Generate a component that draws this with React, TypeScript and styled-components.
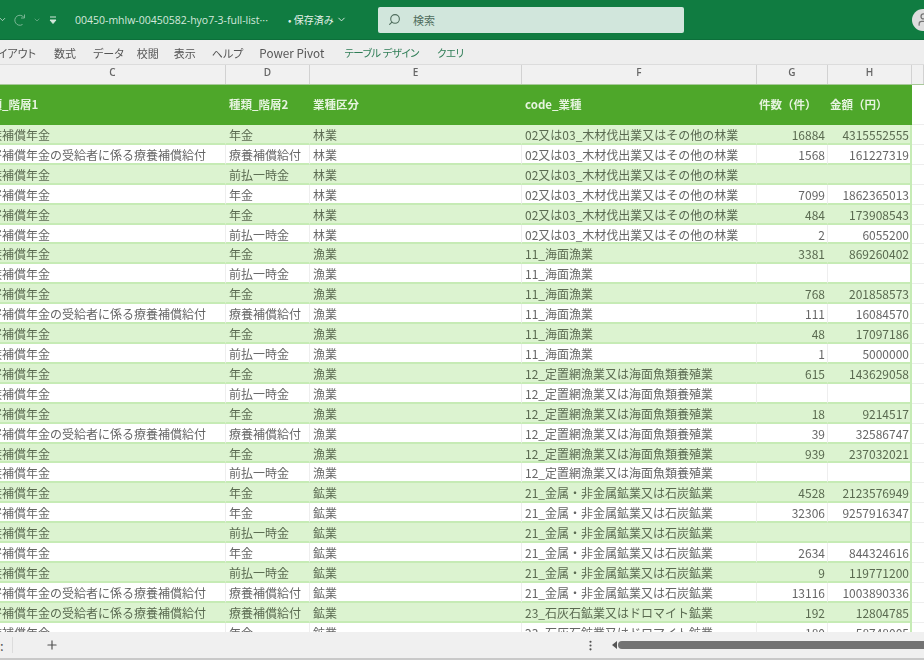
import React from 'react';
import styled, { createGlobalStyle } from 'styled-components';
import { ChevronDown, EllipsisVertical, Plus, Search, User } from 'lucide-react';

const GlobalStyle = createGlobalStyle`
    html, body {
        margin: 0;
        padding: 0;
        background: #ffffff;
    }
    * {
        box-sizing: border-box;
    }
`;

const COLUMNS = '226px 84px 212px 235px 71px 84px 1fr';

const Window = styled.div`
    width: 924px;
    height: 660px;
    overflow: hidden;
    display: flex;
    flex-direction: column;
    font-family: "Noto Sans CJK JP", "Noto Sans", sans-serif;
    font-size: 12px;
    color: #5c5c5c;
    filter: blur(0.5px);
`;

const TitleBar = styled.div`
    flex: 0 0 40px;
    display: flex;
    align-items: center;
    background: #107c41;
    border-bottom: 1px solid #0c6f3a;
    color: #d4e8dc;
    overflow: hidden;
`;

const QuickIcon = styled.span<{ $width: number; $dim?: boolean; $gap?: number }>`
    flex: 0 0 ${(p) => p.$width}px;
    margin-left: ${(p) => p.$gap || 0}px;
    display: flex;
    align-items: center;
    justify-content: center;
    opacity: ${(p) => (p.$dim ? 0.55 : 1)};
`;

const FileName = styled.span`
    flex: 0 0 auto;
    width: 198px;
    margin-left: 14px;
    font-family: "Open Sans", "Noto Sans", sans-serif;
    font-size: 10.5px;
    white-space: nowrap;
`;

const SavedState = styled.span`
    display: flex;
    align-items: center;
    flex: 0 0 auto;
    width: 90px;
    margin-left: 15px;
    font-size: 10px;
    color: #e4f1e9;
    gap: 2px;
`;

const SearchBox = styled.div`
    flex: 0 0 306px;
    height: 26px;
    display: flex;
    align-items: center;
    gap: 12px;
    padding-left: 10px;
    border-radius: 2px;
    background: #d1e6dc;
    color: #4f6d5d;
    font-size: 11px;
`;

const Avatar = styled.div`
    flex: 0 0 22px;
    height: 22px;
    margin-left: auto;
    margin-right: -10px;
    border-radius: 50%;
    background: #dedede;
    color: #767676;
    display: flex;
    align-items: center;
    justify-content: center;
`;

const Ribbon = styled.div`
    flex: 0 0 25px;
    display: flex;
    align-items: center;
    background: #eeeeee;
    box-shadow: inset 0 -1px 0 #dcdcdc;
    font-size: 11px;
    font-feature-settings: "palt";
    white-space: nowrap;
`;

const RibbonTab = styled.span<{ $left: number; $table?: boolean }>`
    margin-left: ${(p) => p.$left}px;
    color: ${(p) => (p.$table ? '#2f7d56' : '#555555')};
    font-size: ${(p) => (p.$table ? '10.5px' : 'inherit')};
    letter-spacing: ${(p) => (p.$table ? '-0.5px' : '0')};
`;

const PivotTab = styled(RibbonTab)`
    font-size: 11.7px;
`;

const ColumnHeader = styled.div`
    flex: 0 0 20px;
    display: grid;
    grid-template-columns: ${COLUMNS};
    background: #f1f1f1;
    border-bottom: 1px solid #a8c99a;
`;

const ColumnLetter = styled.span`
    display: flex;
    align-items: center;
    justify-content: center;
    border-right: 1px solid #d2d2d2;
    font-family: "Open Sans", sans-serif;
    font-size: 10px;
    font-weight: 600;
    color: #666666;
    padding-bottom: 5px;
`;

const Sheet = styled.div`
    flex: 1;
    min-height: 0;
    overflow: hidden;
`;

const Row = styled.div<{ $band: boolean }>`
    display: grid;
    grid-template-columns: ${COLUMNS};
    height: 19.92px;
    line-height: 19px;
    background: ${(p) => (p.$band ? '#dcf3d0' : '#ffffff')};
`;

const Cell = styled.div<{ $band: boolean; $number?: boolean; $lead?: boolean }>`
    overflow: hidden;
    white-space: nowrap;
    padding: 0 ${(p) => (p.$number ? '2px' : '0')} 0 ${(p) => (p.$lead ? '0' : '3px')};
    text-align: ${(p) => (p.$number ? 'right' : 'left')};
    color: ${(p) => (p.$band ? '#5a6a50' : '#666666')};
    border-bottom: 2px solid #c6ebb5;
    border-right: 1px solid ${(p) => (p.$band ? 'transparent' : '#eeeeee')};
`;

const LastCell = styled(Cell)`
    padding-right: 1px;
    border-right: 2px solid #c6ebb5;
`;

const ClippedText = styled.span<{ $shift: number }>`
    display: inline-block;
    margin-left: -${(p) => p.$shift}px;
`;

const HeaderRow = styled.div`
    display: grid;
    grid-template-columns: ${COLUMNS};
    height: 40px;
    line-height: 38px;
`;

const HeaderCell = styled.div<{ $pad: number }>`
    overflow: hidden;
    white-space: nowrap;
    background: #4ea72a;
    color: #e6f4df;
    font-weight: 700;
    font-size: 11.5px;
    padding-left: ${(p) => p.$pad}px;
`;

const Gutter = styled.div`
    background: #ffffff;
    border-bottom: 1px solid #eeeeee;
`;

const BottomBar = styled.div`
    flex: 0 0 28px;
    display: flex;
    align-items: center;
    background: #f0f0f0;
    border-bottom: 2px solid #c9c9c9;
    color: #505050;
`;

const SheetDots = styled.span`
    flex: 0 0 13px;
    height: 16px;
    border-right: 1px solid #dcdcdc;
    display: flex;
    align-items: center;
    font-size: 13px;
    line-height: 1;
`;

const AddSheet = styled.span`
    display: flex;
    margin-left: 32px;
`;

const TabMenu = styled.span`
    display: flex;
    margin-left: 525px;
`;

const ScrollArrow = styled.span`
    width: 0;
    height: 0;
    margin-left: 15px;
    border-top: 4px solid transparent;
    border-bottom: 4px solid transparent;
    border-right: 5px solid #555555;
`;

const ScrollThumb = styled.span`
    flex: 1;
    height: 8px;
    margin: 0 -10px 0 1px;
    border-radius: 4px;
    background: #737373;
`;

const RedoIcon = () => (
    <svg width="14" height="14" viewBox="0 0 14 14" fill="none" stroke="currentColor" strokeWidth="1">
        <path d="M9.5 11.5A5 5 0 1 1 11 4.5" />
        <path d="M11.5 1.5V5H8" />
    </svg>
);

const CustomizeIcon = () => (
    <svg width="10" height="10" viewBox="0 0 10 10" fill="none" stroke="currentColor" strokeWidth="1">
        <path d="M2 2H8" />
        <path d="M2 5H8L5 8.5Z" fill="currentColor" />
    </svg>
);

type SheetRow = {
    prefix: string;
    body?: boolean;
    kind: string;
    sector: string;
    code: string;
    count?: number;
    amount?: number;
};

const NENKIN = '年金';
const ICHIJI = '前払一時金';
const RYOYO = '療養補償給付';
const RINGYO = '02又は03_木材伐出業又はその他の林業';
const KAIMEN = '11_海面漁業';
const TEICHI = '12_定置網漁業又は海面魚類養殖業';
const KINZOKU = '21_金属・非金属鉱業又は石炭鉱業';
const SEKKAI = '23_石灰石鉱業又はドロマイト鉱業';

const rows: SheetRow[] = [
    { prefix: '遺族', kind: NENKIN, sector: '林業', code: RINGYO, count: 16884, amount: 4315552555 },
    { prefix: '障害', body: true, kind: RYOYO, sector: '林業', code: RINGYO, count: 1568, amount: 161227319 },
    { prefix: '遺族', kind: ICHIJI, sector: '林業', code: RINGYO },
    { prefix: '障害', kind: NENKIN, sector: '林業', code: RINGYO, count: 7099, amount: 1862365013 },
    { prefix: '障害', kind: NENKIN, sector: '林業', code: RINGYO, count: 484, amount: 173908543 },
    { prefix: '障害', kind: ICHIJI, sector: '林業', code: RINGYO, count: 2, amount: 6055200 },
    { prefix: '遺族', kind: NENKIN, sector: '漁業', code: KAIMEN, count: 3381, amount: 869260402 },
    { prefix: '遺族', kind: ICHIJI, sector: '漁業', code: KAIMEN },
    { prefix: '障害', kind: NENKIN, sector: '漁業', code: KAIMEN, count: 768, amount: 201858573 },
    { prefix: '障害', body: true, kind: RYOYO, sector: '漁業', code: KAIMEN, count: 111, amount: 16084570 },
    { prefix: '障害', kind: NENKIN, sector: '漁業', code: KAIMEN, count: 48, amount: 17097186 },
    { prefix: '遺族', kind: ICHIJI, sector: '漁業', code: KAIMEN, count: 1, amount: 5000000 },
    { prefix: '障害', kind: NENKIN, sector: '漁業', code: TEICHI, count: 615, amount: 143629058 },
    { prefix: '遺族', kind: ICHIJI, sector: '漁業', code: TEICHI },
    { prefix: '障害', kind: NENKIN, sector: '漁業', code: TEICHI, count: 18, amount: 9214517 },
    { prefix: '障害', body: true, kind: RYOYO, sector: '漁業', code: TEICHI, count: 39, amount: 32586747 },
    { prefix: '遺族', kind: NENKIN, sector: '漁業', code: TEICHI, count: 939, amount: 237032021 },
    { prefix: '遺族', kind: ICHIJI, sector: '漁業', code: TEICHI },
    { prefix: '遺族', kind: NENKIN, sector: '鉱業', code: KINZOKU, count: 4528, amount: 2123576949 },
    { prefix: '障害', kind: NENKIN, sector: '鉱業', code: KINZOKU, count: 32306, amount: 9257916347 },
    { prefix: '遺族', kind: ICHIJI, sector: '鉱業', code: KINZOKU },
    { prefix: '障害', kind: NENKIN, sector: '鉱業', code: KINZOKU, count: 2634, amount: 844324616 },
    { prefix: '遺族', kind: ICHIJI, sector: '鉱業', code: KINZOKU, count: 9, amount: 119771200 },
    { prefix: '障害', body: true, kind: RYOYO, sector: '鉱業', code: KINZOKU, count: 13116, amount: 1003890336 },
    { prefix: '障害', body: true, kind: RYOYO, sector: '鉱業', code: SEKKAI, count: 192, amount: 12804785 },
    { prefix: '遺族', kind: NENKIN, sector: '鉱業', code: SEKKAI, count: 180, amount: 58748005 },
];

const ribbonTabs: { label: string; left: number }[] = [
    { label: 'レイアウト', left: -12 },
    { label: '数式', left: 18 },
    { label: 'データ', left: 17 },
    { label: '校閲', left: 13 },
    { label: '表示', left: 15 },
    { label: 'ヘルプ', left: 16 },
];

export default function App() {
    return (
        <Window>
            <GlobalStyle />
            <TitleBar>
                <QuickIcon $width={7}><ChevronDown size={9} style={{ marginLeft: -2 }} /></QuickIcon>
                <QuickIcon $width={26} $dim><RedoIcon /></QuickIcon>
                <QuickIcon $width={8} $dim><ChevronDown size={8} /></QuickIcon>
                <QuickIcon $width={17} $gap={3}><CustomizeIcon /></QuickIcon>
                <FileName>00450-mhlw-00450582-hyo7-3-full-list···</FileName>
                <SavedState>
                    • 保存済み
                    <ChevronDown size={11} />
                </SavedState>
                <SearchBox>
                    <Search size={13} style={{ transform: 'scaleX(-1)' }} />
                    検索
                </SearchBox>
                <Avatar><User size={15} /></Avatar>
            </TitleBar>
            <Ribbon>
                {ribbonTabs.map((tab) => (
                    <RibbonTab key={tab.label} $left={tab.left}>{tab.label}</RibbonTab>
                ))}
                <PivotTab $left={16}>Power Pivot</PivotTab>
                <RibbonTab $left={20} $table>テーブル デザイン</RibbonTab>
                <RibbonTab $left={18} $table>クエリ</RibbonTab>
            </Ribbon>
            <ColumnHeader>
                {['C', 'D', 'E', 'F', 'G', 'H', ''].map((letter) => (
                    <ColumnLetter key={letter}>{letter}</ColumnLetter>
                ))}
            </ColumnHeader>
            <Sheet>
                <HeaderRow>
                    <HeaderCell $pad={0}><ClippedText $shift={21}>種類_階層1</ClippedText></HeaderCell>
                    <HeaderCell $pad={3}>種類_階層2</HeaderCell>
                    <HeaderCell $pad={3}>業種区分</HeaderCell>
                    <HeaderCell $pad={3}>code_業種</HeaderCell>
                    <HeaderCell $pad={2}>件数（件）</HeaderCell>
                    <HeaderCell $pad={2}>金額（円）</HeaderCell>
                    <Gutter />
                </HeaderRow>
                {rows.map((row, i) => {
                    const band = i % 2 === 0;
                    const lead = row.prefix + '補償年金' + (row.body ? 'の受給者に係る療養補償給付' : '');
                    return (
                        <Row key={i} $band={band}>
                            <Cell $band={band} $lead><ClippedText $shift={22}>{lead}</ClippedText></Cell>
                            <Cell $band={band}>{row.kind}</Cell>
                            <Cell $band={band}>{row.sector}</Cell>
                            <Cell $band={band}>{row.code}</Cell>
                            <Cell $band={band} $number>{row.count}</Cell>
                            <LastCell $band={band} $number>{row.amount}</LastCell>
                            <Gutter />
                        </Row>
                    );
                })}
            </Sheet>
            <BottomBar>
                <SheetDots>:</SheetDots>
                <AddSheet><Plus size={14} /></AddSheet>
                <TabMenu><EllipsisVertical size={13} /></TabMenu>
                <ScrollArrow />
                <ScrollThumb />
            </BottomBar>
        </Window>
    );
}
